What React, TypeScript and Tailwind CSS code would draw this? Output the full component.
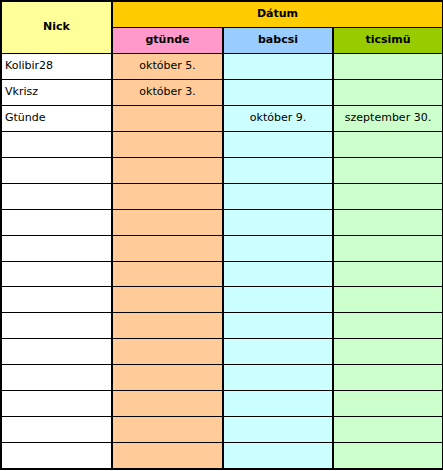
import React from 'react';

const rows: [string, string, string, string][] = [
    ['Kolibir28', 'október 5.', '', ''],
    ['Vkrisz', 'október 3.', '', ''],
    ['Gtünde', '', 'október 9.', 'szeptember 30.'],
];

const App: React.FC = () => {
    const data = Array.from({ length: 16 }, (_, i) => rows[i] ?? ['', '', '', '']);

    return (
        <div className="bg-white w-[443px] h-[471px] font-['DejaVu_Sans',sans-serif] text-[11px] text-black">
            <div className="w-[443px] h-[470px] border-2 border-black bg-black grid grid-cols-[109px_109px_108px_108px] grid-rows-[25px_25px_repeat(16,1fr)] gap-x-[2px] gap-y-px">
                <div className="row-span-2 bg-[#ffff99] flex items-center justify-center font-bold">Nick</div>
                <div className="col-span-3 bg-[#ffcc00] flex items-center justify-center font-bold">Dátum</div>
                <div className="bg-[#ff99cc] flex items-center justify-center font-bold">gtünde</div>
                <div className="bg-[#99ccff] flex items-center justify-center font-bold">babcsi</div>
                <div className="bg-[#99cc00] flex items-center justify-center font-bold">ticsimü</div>
                {data.map((r, i) => (
                    <React.Fragment key={i}>
                        <div className="bg-white flex items-center pl-[3px]">{r[0]}</div>
                        <div className="bg-[#ffcc99] flex items-center justify-center">{r[1]}</div>
                        <div className="bg-[#ccffff] flex items-center justify-center">{r[2]}</div>
                        <div className="bg-[#ccffcc] flex items-center justify-center">{r[3]}</div>
                    </React.Fragment>
                ))}
            </div>
        </div>
    );
};

export default App;
